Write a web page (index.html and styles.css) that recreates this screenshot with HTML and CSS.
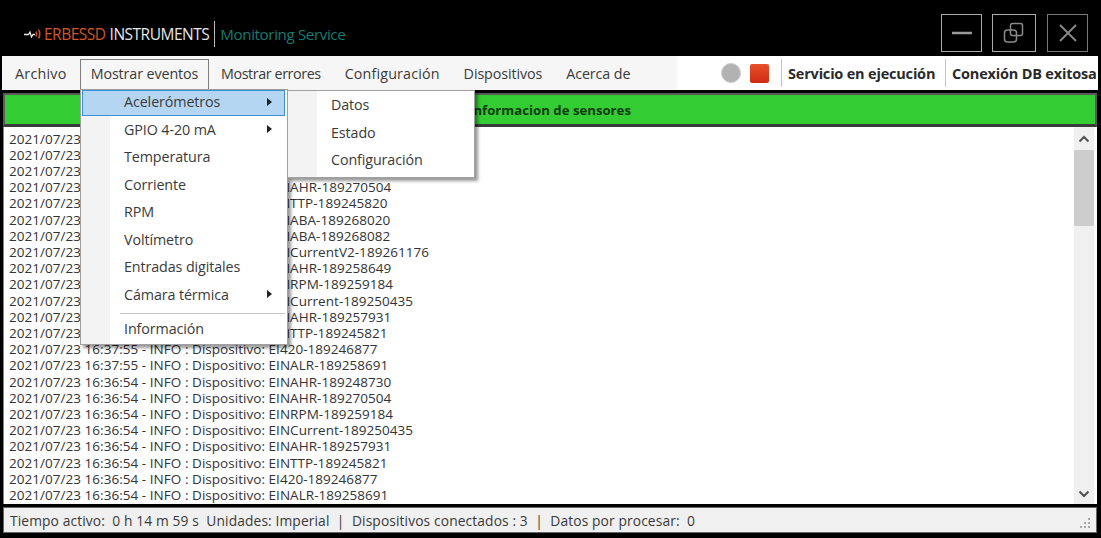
FILE: index.html
```html
<!DOCTYPE html>
<html lang="es">
<head>
<meta charset="utf-8">
<title>Monitoring Service</title>
<link rel="stylesheet" href="styles.css">
</head>
<body>
<div class="window">
  <header class="titlebar">
    <div class="logo">
      <svg class="logo-icon" width="18" height="12" viewBox="0 0 18 12"><path d="M0 6.500H4.500L6 4 7.500 9 9 6.500H11" fill="none" stroke="#e8e8e8" stroke-width="1.300"/><path d="M12 3.500Q13.500 6 12 8.500M14.500 1.500Q17 6 14.500 10.500" fill="none" stroke="#d2562a" stroke-width="1.500"/></svg>
      <span class="brand-a">ERBESSD</span>
      <span class="brand-b">INSTRUMENTS</span>
      <span class="brand-sep"></span>
      <span class="brand-c">Monitoring Service</span>
    </div>
    <div class="winbtns">
      <button class="winbtn b-min"><svg width="20" height="4" viewBox="0 0 20 4"><path d="M0 2H20" stroke="#999" stroke-width="2.500"/></svg></button>
      <button class="winbtn b-max"><svg width="22" height="22" viewBox="0 0 22 22"><rect x="7.500" y="1.500" width="12" height="12" rx="2" fill="none" stroke="#8a8a8a" stroke-width="1.500"/><rect x="1.500" y="8" width="12" height="12" rx="3" fill="none" stroke="#8a8a8a" stroke-width="1.500"/></svg></button>
      <button class="winbtn b-close"><svg width="20" height="20" viewBox="0 0 20 20"><path d="M2 2L18 18M18 2L2 18" stroke="#8a8a8a" stroke-width="1.800"/></svg></button>
    </div>
  </header>

  <nav class="menubar">
    <ul class="menu-left">
      <li class="mi m-archivo">Archivo</li>
      <li class="mi active">Mostrar eventos</li>
      <li class="mi m-errores">Mostrar errores</li>
      <li class="mi m-config">Configuración</li>
      <li class="mi">Dispositivos</li>
      <li class="mi">Acerca de</li>
    </ul>
    <div class="menu-right">
      <span class="led-gray"></span>
      <span class="led-red"></span>
      <span class="stat s1">Servicio en ejecución</span>
      <span class="stat s2">Conexión DB exitosa</span>
    </div>
  </nav>

  <main class="content">
    <div class="greenbar">Informacion de sensores</div>
    <div class="logbox">
      <div class="loglines">
        <div>2021/07/23 16:38:55 - INFO : Dispositivo: EINALR-189258691</div>
        <div>2021/07/23 16:38:55 - INFO : Dispositivo: EINAHR-189248730</div>
        <div>2021/07/23 16:38:55 - INFO : Dispositivo: EINALR-189248731</div>
        <div>2021/07/23 16:37:55 - INFO : Dispositivo: EINAHR-189270504</div>
        <div>2021/07/23 16:37:55 - INFO : Dispositivo: EINTTP-189245820</div>
        <div>2021/07/23 16:37:55 - INFO : Dispositivo: EINABA-189268020</div>
        <div>2021/07/23 16:37:55 - INFO : Dispositivo: EINABA-189268082</div>
        <div>2021/07/23 16:37:55 - INFO : Dispositivo: EINCurrentV2-189261176</div>
        <div>2021/07/23 16:37:55 - INFO : Dispositivo: EINAHR-189258649</div>
        <div>2021/07/23 16:37:55 - INFO : Dispositivo: EINRPM-189259184</div>
        <div>2021/07/23 16:37:55 - INFO : Dispositivo: EINCurrent-189250435</div>
        <div>2021/07/23 16:37:55 - INFO : Dispositivo: EINAHR-189257931</div>
        <div>2021/07/23 16:37:55 - INFO : Dispositivo: EINTTP-189245821</div>
        <div>2021/07/23 16:37:55 - INFO : Dispositivo: EI420-189246877</div>
        <div>2021/07/23 16:37:55 - INFO : Dispositivo: EINALR-189258691</div>
        <div>2021/07/23 16:36:54 - INFO : Dispositivo: EINAHR-189248730</div>
        <div>2021/07/23 16:36:54 - INFO : Dispositivo: EINAHR-189270504</div>
        <div>2021/07/23 16:36:54 - INFO : Dispositivo: EINRPM-189259184</div>
        <div>2021/07/23 16:36:54 - INFO : Dispositivo: EINCurrent-189250435</div>
        <div>2021/07/23 16:36:54 - INFO : Dispositivo: EINAHR-189257931</div>
        <div>2021/07/23 16:36:54 - INFO : Dispositivo: EINTTP-189245821</div>
        <div>2021/07/23 16:36:54 - INFO : Dispositivo: EI420-189246877</div>
        <div>2021/07/23 16:36:54 - INFO : Dispositivo: EINALR-189258691</div>
      </div>
      <div class="scrollbar">
        <svg class="sb-arrow" width="12" height="8" viewBox="0 0 12 8"><path d="M1.500 6.500L6 2 10.500 6.500" fill="none" stroke="#505050" stroke-width="2"/></svg>
        <div class="sb-track"><div class="sb-thumb"></div></div>
        <svg class="sb-arrow" width="12" height="8" viewBox="0 0 12 8"><path d="M1.500 1.500L6 6 10.500 1.500" fill="none" stroke="#505050" stroke-width="2"/></svg>
      </div>
    </div>
  </main>

  <footer class="statusbar">
    <span>Tiempo activo:&nbsp; 0 h 14 m 59 s&nbsp; Unidades: Imperial &nbsp;|&nbsp; Dispositivos conectados : 3 &nbsp;|&nbsp; Datos por procesar:&nbsp; 0</span>
    <svg class="grip" width="14" height="14" viewBox="0 0 14 14" fill="#a8a8a8"><rect x="10" y="1" width="2" height="2"/><rect x="6" y="5" width="2" height="2"/><rect x="10" y="5" width="2" height="2"/><rect x="2" y="9" width="2" height="2"/><rect x="6" y="9" width="2" height="2"/><rect x="10" y="9" width="2" height="2"/></svg>
  </footer>
</div>

<div class="dropdown dd-main">
  <div class="dd-item hl">Acelerómetros<i class="arrow"></i></div>
  <div class="dd-item">GPIO 4-20 mA<i class="arrow"></i></div>
  <div class="dd-item">Temperatura</div>
  <div class="dd-item">Corriente</div>
  <div class="dd-item">RPM</div>
  <div class="dd-item">Voltímetro</div>
  <div class="dd-item">Entradas digitales</div>
  <div class="dd-item">Cámara térmica<i class="arrow"></i></div>
  <div class="dd-sep"></div>
  <div class="dd-item">Información</div>
</div>
<div class="dropdown dd-sub">
  <div class="dd-item">Datos</div>
  <div class="dd-item">Estado</div>
  <div class="dd-item">Configuración</div>
</div>
</body>
</html>
```
FILE: styles.css
```css
* { box-sizing: border-box; }
html, body { margin: 0; height: 100%; overflow: hidden; background: #000; }
body { font-family: "Open Sans", "Noto Sans", "Liberation Sans", sans-serif; color: #333; }

.window { display: flex; flex-direction: column; height: 538px; padding-bottom: 5px; }

.titlebar { height: 56px; flex: none; display: flex; justify-content: space-between; align-items: flex-start; padding: 14px 13px 0 24px; }
.logo { display: flex; align-items: center; height: 39px; font-size: 15.500px; letter-spacing: -0.500px; white-space: nowrap; }
.logo-icon { margin-right: 2px; }
.brand-a { color: #d2562a; }
.brand-b { color: #e6e6e6; margin-left: 4px; }
.brand-sep { width: 1px; height: 26px; background: #bbb; margin: 0 5px 0 5px; }
.brand-c { color: #157a70; font-size: 15.200px; letter-spacing: -0.400px; }
.winbtns { display: flex; }
.winbtn { display: flex; align-items: center; justify-content: center; height: 38px; padding: 0; background: #000; border: 1.500px solid #aaa; }
.b-min { width: 41px; }
.b-max { width: 44px; margin-left: 10px; }
.b-close { width: 41px; margin-left: 11px; border-color: #777; }

.menubar { height: 34px; flex: none; margin: 0 3px 0 2px; display: flex; justify-content: space-between; background: #f6f6f6; border-radius: 0 2px 0 0; }
.menu-left { display: flex; list-style: none; margin: 0; padding: 0; }
.mi { display: flex; align-items: center; height: 34px; padding: 0 12px; font-size: 14.300px; letter-spacing: -0.100px; color: #3a3a3a; white-space: nowrap; }
.m-archivo { width: 78px; padding: 0 0 0 13px; letter-spacing: 0.250px; }
.m-errores { letter-spacing: -0.400px; }
.m-config { letter-spacing: 0.150px; }
.mi.active { position: relative; width: 129px; height: 31px; margin-top: 3px; padding: 0 0 3px; justify-content: center; background: #f6f6f6; border: 1px solid #7d7d7d; border-bottom: 0; }
.menu-right { display: flex; align-items: center; background: #fff; padding-left: 44px; width: 421px; }
.led-gray { width: 20px; height: 20px; border-radius: 50%; background: #b2b2b2; border: 1px solid #cccccc; }
.led-red { width: 19px; height: 19px; margin-left: 9px; border-radius: 2px; background: linear-gradient(#e8502c, #cf2c12); }
.stat { height: 28px; display: flex; align-items: center; font-size: 14.500px; font-weight: 700; letter-spacing: -0.190px; color: #2a2a2a; white-space: nowrap; border-left: 1px solid #c4c4c4; }
.s1 { margin-left: 12px; padding-left: 6px; width: 164px; }
.s2 { padding-left: 6px; }

.content { flex: 1; min-height: 0; display: flex; flex-direction: column; margin: 3px 4px 0 3px; }
.greenbar { flex: none; height: 34px; padding-top: 1px; display: flex; align-items: center; justify-content: center; background: #33cc33; border: 2px solid #5a5a5a; border-bottom: 3px solid #3a3a3a; font-size: 13.200px; font-weight: 700; color: #0d3a10; }
.logbox { flex: 1; min-height: 0; display: flex; justify-content: space-between; background: #fff; border-left: 1px solid #888; overflow: hidden; }
.loglines { flex: 1; padding: 3.500px 0 0 5px; font-size: 13.500px; letter-spacing: 0.040px; line-height: 16.200px; color: #333; white-space: nowrap; overflow: hidden; }
.scrollbar { width: 20px; margin-right: 3px; flex: none; background: #f0f0f0; display: flex; flex-direction: column; align-items: center; padding: 8px 0 6px; }
.sb-arrow { flex: none; }
.sb-track { flex: 1; width: 100%; padding-top: 7px; }
.sb-thumb { height: 76px; background: #cdcdcd; }

.statusbar { flex: none; height: 26px; margin: 3px 4px 0 3px; display: flex; align-items: center; justify-content: space-between; background: #f0f0f0; border: 1px solid #666; padding: 0 4px 0 6px; font-size: 13.800px; letter-spacing: 0.110px; color: #3a3a3a; white-space: pre; }
.grip { align-self: flex-end; margin-bottom: 1px; }

.dropdown { position: absolute; background: #fff; border: 1px solid #a0a0a0; box-shadow: 3px 3px 3px rgba(0,0,0,.4); background-image: linear-gradient(#f3f3f3, #f3f3f3); background-repeat: repeat-y; background-size: 29px 100%; font-size: 14.300px; letter-spacing: -0.100px; color: #3a3a3a; }
.dd-main { left: 80px; top: 89px; width: 208px; height: 256px; padding: 0 2px 0 1px; }
.dd-sub { left: 287px; top: 90px; width: 188px; height: 88px; padding: 2px 2px 0 1px; }
.dd-item { position: relative; height: 27.500px; line-height: 23px; padding-left: 42px; white-space: nowrap; }
.dd-item.hl { height: 26px; margin-bottom: 1.500px; line-height: 22px; padding-left: 41px; background: #b5d6f3; border: 1px solid #3c8fd2; }
.dd-sep { height: 1px; margin: 3px 0 2.500px 38px; background: #c8c8c8; }
.arrow { position: absolute; right: 13px; top: 7px; width: 0; height: 0; border-left: 5px solid #222; border-top: 4.500px solid transparent; border-bottom: 4.500px solid transparent; }
.hl .arrow { right: 12px; top: 7px; }
```
